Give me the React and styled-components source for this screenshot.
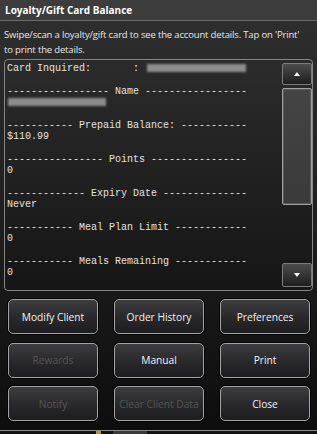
import styled, { createGlobalStyle } from "styled-components";

const GlobalStyle = createGlobalStyle`
  html, body {
    margin: 0;
    padding: 0;
    background: #0b0b0b;
  }
  body {
    font-family: "Open Sans", "Noto Sans", sans-serif;
  }
`;

const Dialog = styled.div`
  width: 317px;
  height: 434px;
  display: flex;
  flex-direction: column;
  background: linear-gradient(to bottom, #2f2f2f 0%, #1d1d1d 55%, #0d0d0d 100%);
  overflow: hidden;
`;

const TitleBar = styled.div`
  flex: none;
  height: 20px;
  display: flex;
  align-items: center;
  padding-left: 5px;
  background: #3c3c3c;
  border-bottom: 1px solid #6b6b6b;
  color: #fff;
  font-weight: 700;
  font-size: 10px;
`;

const Hint = styled.p`
  flex: none;
  box-sizing: border-box;
  height: 38px;
  margin: 0;
  padding: 6px 4px 0;
  color: #e8e8e8;
  font-size: 9.5px;
  letter-spacing: -0.16px;
  line-height: 15px;
  white-space: nowrap;
`;

const OutputBox = styled.div`
  flex: none;
  box-sizing: border-box;
  height: 232px;
  margin: 0 4px;
  display: flex;
  border: 1px solid #858585;
  border-radius: 4px;
  background: linear-gradient(to bottom, #2b2b2b, #161616);
`;

const Output = styled.div`
  flex: 1;
  padding: 3px 0 0 2px;
  overflow: hidden;
  font-family: "Liberation Mono", "DejaVu Sans Mono", monospace;
  font-size: 10px;
  color: #e2e2e2;
`;

const Line = styled.div`
  height: 11.37px;
  line-height: 11.37px;
  white-space: pre;
`;

const Blur = styled.span`
  display: inline-block;
  width: ${(p) => p.$w}px;
  height: 8px;
  margin-left: ${(p) => p.$left || 0}px;
  vertical-align: -1px;
  background: #8c8c8c;
  filter: blur(1.2px);
`;

const Scrollbar = styled.div`
  flex: none;
  width: 30px;
  display: flex;
  flex-direction: column;
  padding: 3px 0;
`;

const ScrollButton = styled.div`
  height: ${(p) => p.$h}px;
  box-sizing: border-box;
  display: flex;
  align-items: center;
  justify-content: center;
  border: 1px solid #7c7c7c;
  border-radius: 2px;
  background: linear-gradient(to bottom, #4c4c4c, #1e1e1e);
  margin-top: ${(p) => (p.$end ? "auto" : "0")};
`;

const Thumb = styled.div`
  height: 117px;
  box-sizing: border-box;
  margin-top: 3px;
  border: 1px solid #a0a0a0;
  border-radius: 2px;
  box-shadow: inset 0 0 0 1px #5a5a5a;
  background: linear-gradient(to bottom, #444 0%, #3a3a3a 100%);
`;

const ButtonGrid = styled.div`
  flex: none;
  display: grid;
  grid-template-columns: repeat(3, 90px);
  grid-auto-rows: 35px;
  column-gap: 16px;
  row-gap: 8.5px;
  margin: 8px 0 0 8px;
`;

const Button = styled.button`
  box-sizing: border-box;
  padding: 0;
  border: 1px solid #a3a3a3;
  border-radius: 5px;
  box-shadow: 0 0 0 1px #050505;
  background: linear-gradient(to bottom, #3d3d40 0%, #2a2a2c 50%, #1d1d1f 100%);
  color: ${(p) => (p.disabled ? "#555" : "#f2f2f2")};
  font-family: "Open Sans", "Noto Sans", sans-serif;
  font-size: 10.2px;
`;

const Footer = styled.div`
  margin-top: auto;
  height: 3px;
  display: flex;
  border-top: 1px solid #8a8a8a;
  background: #111;
`;

const FooterMark = styled.span`
  width: ${(p) => p.$w}px;
  margin-left: ${(p) => p.$left}px;
  background: ${(p) => p.$color};
`;

function Arrow({ down }) {
  return (
    <svg width="6" height="4" viewBox="0 0 6 4">
      <polygon points={down ? "0,0 6,0 3,4" : "0,4 6,4 3,0"} fill="#fff" />
    </svg>
  );
}

const rows = [
  <>
    {"Card Inquired:       :"}
    <Blur $w={99} $left={8} />
  </>,
  "",
  "----------------- Name -----------------",
  <Blur $w={98} $left={1} />,
  "",
  "----------- Prepaid Balance: -----------",
  "$110.99",
  "",
  "---------------- Points ----------------",
  "0",
  "",
  "------------- Expiry Date --------------",
  "Never",
  "",
  "----------- Meal Plan Limit ------------",
  "0",
  "",
  "----------- Meals Remaining ------------",
  "0",
];

const buttons = [
  { label: "Modify Client" },
  { label: "Order History" },
  { label: "Preferences" },
  { label: "Rewards", off: true },
  { label: "Manual" },
  { label: "Print" },
  { label: "Notify", off: true },
  { label: "Clear Client Data", off: true },
  { label: "Close" },
];

export default function App() {
  return (
    <>
      <GlobalStyle />
      <Dialog>
        <TitleBar>Loyalty/Gift Card Balance</TitleBar>
        <Hint>
          Swipe/scan a loyalty/gift card to see the account details. Tap on 'Print'
          <br />
          to print the details.
        </Hint>
        <OutputBox>
          <Output>
            {rows.map((r, i) => (
              <Line key={i}>{r}</Line>
            ))}
          </Output>
          <Scrollbar>
            <ScrollButton $h={22}>
              <Arrow />
            </ScrollButton>
            <Thumb />
            <ScrollButton $h={24} $end>
              <Arrow down />
            </ScrollButton>
          </Scrollbar>
        </OutputBox>
        <ButtonGrid>
          {buttons.map((b) => (
            <Button key={b.label} disabled={b.off}>
              {b.label}
            </Button>
          ))}
        </ButtonGrid>
        <Footer>
          <FooterMark $w={5} $left={96} $color="#d68a1c" />
          <FooterMark $w={34} $left={12} $color="#3a3a3a" />
        </Footer>
      </Dialog>
    </>
  );
}
